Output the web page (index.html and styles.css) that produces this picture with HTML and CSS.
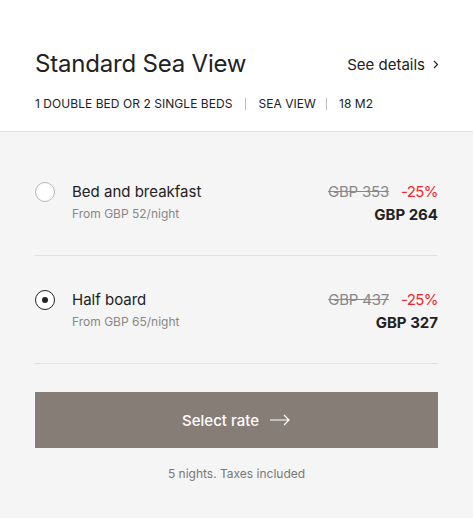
FILE: index.html
```html
<!DOCTYPE html>
<html>
<head>
<meta charset="utf-8">
<link rel="stylesheet" href="styles.css">
</head>
<body>
<div class="card">
  <header class="head">
    <div class="title-row">
      <h1 class="title">Standard Sea View</h1>
      <a class="details">See details <svg class="chev" width="6" height="9" viewBox="0 0 6 9"><path d="M1 1l3.5 3.5L1 8" fill="none" stroke="#222" stroke-width="1.2"/></svg></a>
    </div>
    <div class="meta">
      <span>1 DOUBLE BED OR 2 SINGLE BEDS</span>
      <span class="sep"></span>
      <span>SEA VIEW</span>
      <span class="sep"></span>
      <span>18 M2</span>
    </div>
  </header>
  <section class="body">
    <div class="rate">
      <span class="radio"></span>
      <div class="info">
        <div class="name">Bed and breakfast</div>
        <div class="sub">From GBP 52/night</div>
      </div>
      <div class="price">
        <div class="old-row"><s class="old">GBP 353</s><span class="disc">-25%</span></div>
        <div class="new">GBP 264</div>
      </div>
    </div>
    <div class="rate">
      <span class="radio checked"></span>
      <div class="info">
        <div class="name">Half board</div>
        <div class="sub">From GBP 65/night</div>
      </div>
      <div class="price">
        <div class="old-row"><s class="old">GBP 437</s><span class="disc">-25%</span></div>
        <div class="new">GBP 327</div>
      </div>
    </div>
    <button class="cta">Select rate <svg width="22" height="12" viewBox="0 0 22 12"><path d="M1 6h19M15 1l5 5-5 5" fill="none" stroke="#fff" stroke-width="1.2"/></svg></button>
    <p class="note">5 nights. Taxes included</p>
  </section>
</div>
</body>
</html>
```
FILE: styles.css
```css
* { box-sizing: border-box; }
html, body { margin: 0; padding: 0; }
body {
  font-family: Inter, "Liberation Sans", sans-serif;
  color: #222;
  background: #f5f5f5;
  width: 473px;
  height: 518px;
  overflow: hidden;
}
.card { display: flex; flex-direction: column; }
.head {
  background: #fff;
  padding: 49px 35px 0 35px;
  height: 132px;
  border-bottom: 1px solid #e4e4e4;
}
.title-row { display: flex; align-items: center; justify-content: space-between; }
.title {
  margin: 0;
  font-weight: 400;
  font-size: 24px;
  line-height: 30px;
  letter-spacing: -0.2px;
}
.details {
  font-size: 15px;
  color: #222;
  display: flex;
  align-items: center;
  gap: 8px;
  margin-right: -1px;
}
.chev { margin-top: 1px; }
.meta {
  margin-top: 17px;
  display: flex;
  align-items: center;
  font-size: 12px;
  line-height: 16px;
  color: #222;
  letter-spacing: 0.05px;
}
.sep {
  width: 1px;
  height: 12px;
  background: #bbb;
  margin: 0 12px 0 13px;
}
.sep + span + .sep { margin: 0 12px 0 10px; }
.body { padding: 16px 35px 0 35px; }
.rate {
  display: flex;
  align-items: flex-start;
  padding: 33px 0 29px 0;
  border-bottom: 1px solid #e2e2e2;
}
.radio {
  width: 20px;
  height: 20px;
  border: 1px solid #b8b8b8;
  border-radius: 50%;
  background: #fff;
  margin-top: 1px;
  flex: none;
  display: flex;
  align-items: center;
  justify-content: center;
}
.radio.checked { border: 1.5px solid #222; }
.radio.checked::after {
  content: "";
  width: 6px;
  height: 6px;
  border-radius: 50%;
  background: #222;
}
.info { margin-left: 17px; flex: 1; }
.name { font-size: 15px; line-height: 22px; }
.sub { font-size: 12px; line-height: 18px; color: #888; margin-top: 2px; }
.price { text-align: right; }
.old-row { font-size: 15px; line-height: 22px; display: flex; gap: 12px; justify-content: flex-end; }
.old { color: #888; letter-spacing: -0.2px; }
.disc { color: #f2262a; letter-spacing: -0.6px; }
.new { font-size: 15px; line-height: 22px; font-weight: 700; margin-top: 1px; }
.cta {
  display: flex;
  align-items: center;
  justify-content: center;
  gap: 10px;
  width: 100%;
  height: 56px;
  margin-top: 28px;
  border: 0;
  background: #867d77;
  color: #fff;
  font-family: inherit;
  font-size: 15px;
  font-weight: 500;
}
.note {
  margin: 18px 0 0 0;
  text-align: center;
  font-size: 12px;
  line-height: 16px;
  color: #777;
}
```
